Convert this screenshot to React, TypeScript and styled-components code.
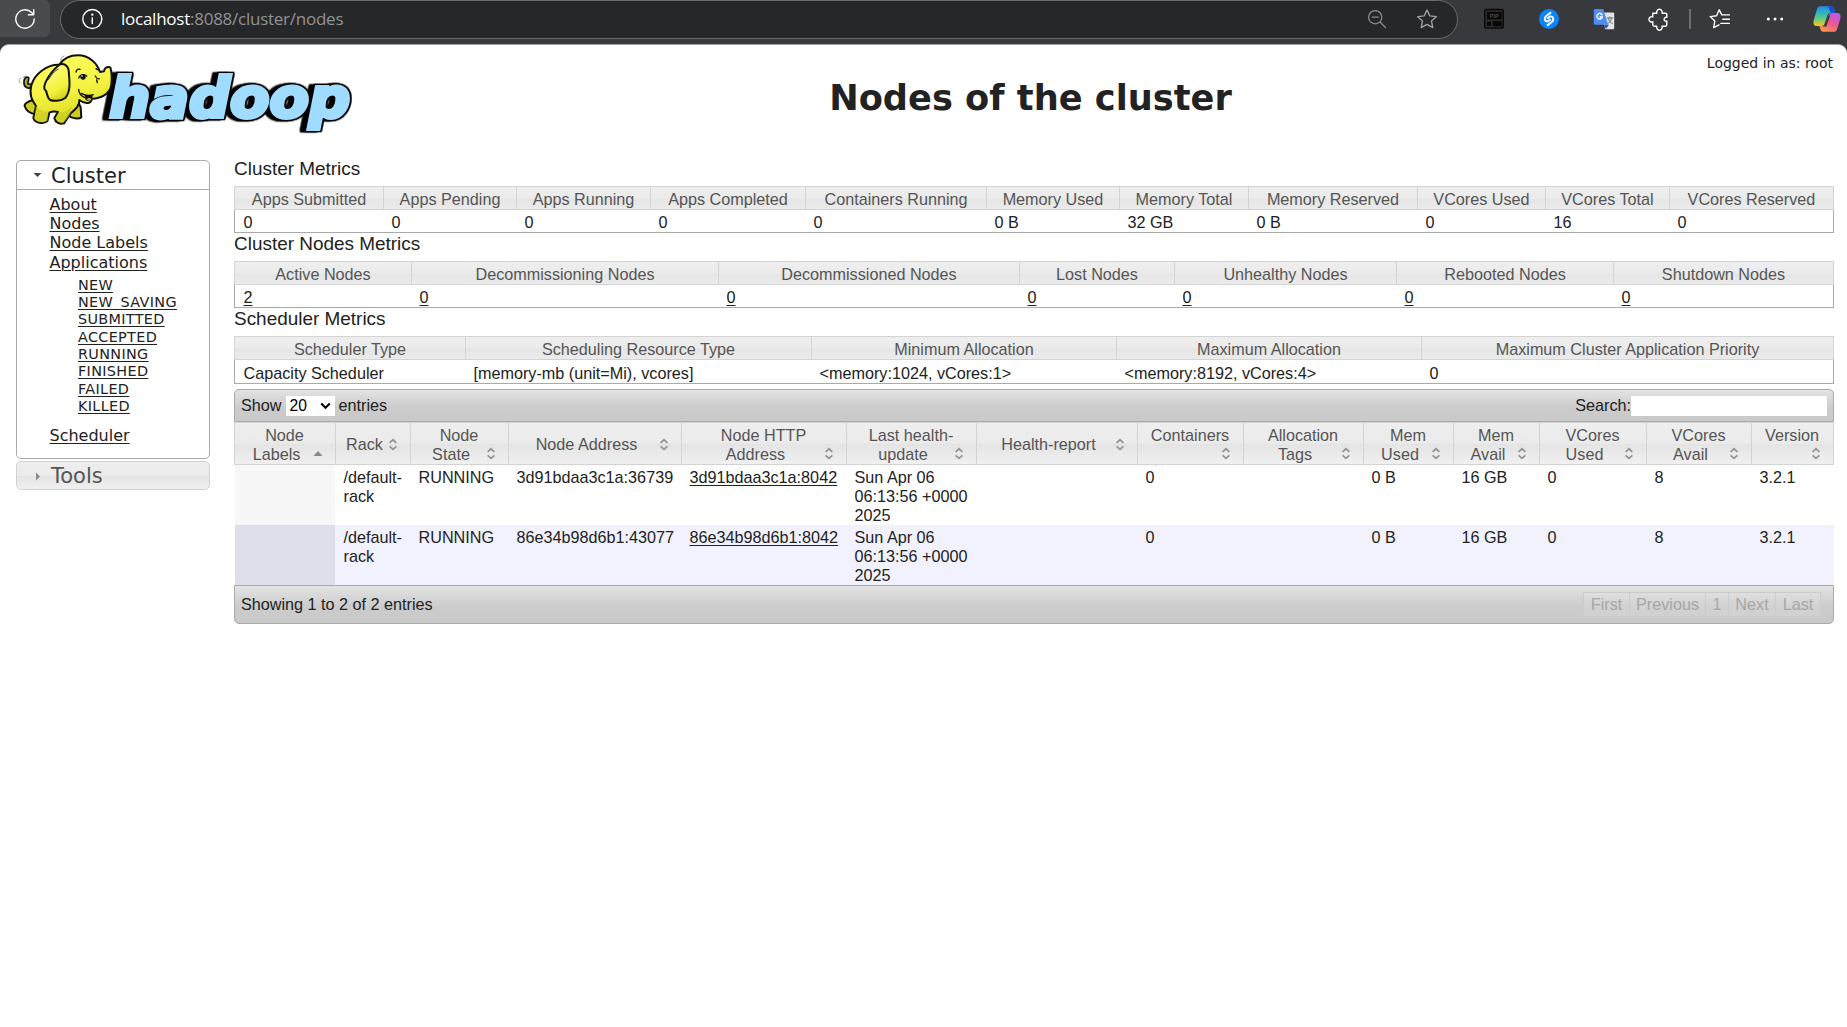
import React from "react";
import styled, { createGlobalStyle, css } from "styled-components";

const sans = `"Liberation Sans", Arial, sans-serif`;
const verdana = `"DejaVu Sans", Verdana, sans-serif`;

const GlobalStyle = createGlobalStyle`
  * { box-sizing: border-box; }
  body { margin: 0; background: #38393d; overflow: hidden; }
`;

const Window = styled.div`
  width: 1847px;
  height: 1027px;
  display: flex;
  flex-direction: column;
  overflow: hidden;
  background: #38393d;
`;

/* ---------- browser bar ---------- */

const BrowserBar = styled.div`
  flex: none;
  height: 44px;
  display: flex;
  align-items: flex-start;
  overflow: hidden;
`;

const ReloadButton = styled.div`
  flex: none;
  width: 50px;
  height: 37px;
  margin-right: 10px;
  padding: 4px 0 0 10px;
  background: #4a4b4e;
  border-radius: 0 6px 6px 0;
`;

const AddressBar = styled.div`
  flex: none;
  width: 1398px;
  height: 39px;
  display: flex;
  align-items: flex-start;
  background: #262729;
  border: 1px solid #6c6c6e;
  border-radius: 20px;
  margin-right: 8px;
  padding: 3px 5px 0 16px;
`;

const Address = styled.div`
  flex: 1;
  margin-left: 14px;
  font: 17px/30px "Open Sans", "Noto Sans", sans-serif;
  letter-spacing: -0.25px;
  color: #929294;
`;

const Host = styled.span`
  color: #fff;
`;

const Slot = styled.div<{ $w: number; $h?: number }>`
  flex: none;
  width: ${(p) => p.$w}px;
  height: ${(p) => p.$h ?? 38}px;
  display: flex;
  align-items: center;
  justify-content: center;
`;

const Divider = styled.div`
  flex: none;
  width: 2px;
  height: 20px;
  margin: 9px 1px 0 3px;
  background: #6d6e71;
`;

const BarIcon = styled.svg`
  flex: none;
  width: 30px;
  height: 30px;
  display: block;
  fill: none;
  stroke-linecap: round;
  stroke-linejoin: round;
`;

/* ---------- page ---------- */

const Page = styled.main`
  flex: 1;
  display: flex;
  flex-direction: column;
  background: #fff;
  border-top: 1px solid #a3a3a5;
  border-radius: 9px 9px 0 0;
  color: #222;
`;

const Header = styled.header`
  height: 113px;
  display: grid;
  grid-template-columns: 370px 1fr 156px;
  padding-right: 14px;
`;

const Logo = styled.svg`
  width: 370px;
  height: 95px;
  display: block;
`;

const Wordmark = styled.text`
  font: italic bold 168px ${verdana};
  fill: #9fdcff;
  stroke: #9fdcff;
  stroke-width: 12px;
  stroke-linejoin: miter;
  filter: drop-shadow(4px 0 0 #000) drop-shadow(-4px 0 0 #000) drop-shadow(0 4px 0 #000)
    drop-shadow(0 -4px 0 #000) drop-shadow(-14px 1px 0 #000);
`;

const Title = styled.h1`
  margin: 0;
  padding: 30px 0 0 14px;
  text-align: center;
  font: bold 35.2px/46px ${verdana};
`;

const Login = styled.div`
  padding-top: 9px;
  text-align: right;
  white-space: nowrap;
  font: 14px/18px ${verdana};
`;

const Columns = styled.div`
  display: grid;
  grid-template-columns: 194px 1600px;
  column-gap: 24px;
  padding-left: 16px;
  align-items: start;
`;

/* ---------- sidebar ---------- */

const Sidebar = styled.nav`
  padding-top: 2px;
  display: flex;
  flex-direction: column;
  gap: 2px;
  font-family: ${verdana};
`;

const Panel = styled.section`
  border: 1px solid #aaa;
  border-radius: 5px;
  height: 299px;
`;

const PanelHead = styled.div<{ $closed?: boolean }>`
  height: 29px;
  display: flex;
  align-items: center;
  gap: 9px;
  padding: 1px 0 0 16px;
  font-size: 21px;
  line-height: 28px;
  ${(p) =>
    p.$closed
      ? css`
          border: 1px solid #d3d3d3;
          border-radius: 5px;
          color: #555;
          background: linear-gradient(#ededed 0, #ebebeb 50%, #e4e4e4 52%, #efefef 100%);
        `
      : css`
          border-bottom: 1px solid #aaa;
        `}
`;

const Caret = styled.svg`
  width: 9px;
  height: 9px;
`;

const NavList = styled.ul`
  list-style: none;
  margin: 0;
  padding: 5px 0 0 32.5px;
  font-size: 16px;
  line-height: 19.2px;
`;

const SubList = styled.ul`
  list-style: none;
  margin: 0;
  padding: 5px 0 11px 28.5px;
  font-size: 14.4px;
  line-height: 17.3px;
  letter-spacing: 0.33px;
`;

const Link = styled.a`
  color: #222;
  text-decoration: underline;
  text-decoration-thickness: 1px;
  text-underline-offset: 2px;
`;

/* ---------- metrics ---------- */

const Content = styled.div`
  font-family: ${sans};
  font-size: 16.2px;
`;

const SectionTitle = styled.div`
  height: 28px;
  font-size: 18.95px;
  line-height: 22px;
`;

const Table = styled.table`
  width: 1600px;
  table-layout: fixed;
  border-collapse: separate;
  border-spacing: 0;
  display: table;
`;

const headFill = "linear-gradient(#eeeeee 0, #ebebeb 49%, #e4e4e4 52%, #f0f0f0 100%)";

const MetricHead = styled.th`
  height: 24px;
  padding: 2px 0 0;
  font-weight: normal;
  line-height: 18px;
  text-align: center;
  color: #555;
  border: 1px solid #d3d3d3;
  border-right-width: 0;
  background: linear-gradient(#eeeeee 0, #ebebeb 50%, #e6e6e6 56%, #ebebeb 100%);
  &:last-child { border-right-width: 1px; }
`;

const MetricCell = styled.td<{ $h: number }>`
  height: ${(p) => p.$h}px;
  padding: 2px 0 0 8.5px;
  line-height: 18px;
  border-bottom: 1px solid #aaa;
  &:first-child { border-left: 1px solid #aaa; }
  &:last-child { border-right: 1px solid #aaa; }
`;

/* ---------- data table ---------- */

const barFill = "linear-gradient(#e3e3e3 0, #cccccc 55%, #c9c9c9 100%)";

const Toolbar = styled.div`
  height: 33px;
  margin-top: 5px;
  padding: 0 6px;
  display: flex;
  align-items: center;
  border: 1px solid #aaa;
  border-radius: 5px 5px 0 0;
  background: ${barFill};
`;

const Select = styled.div`
  width: 49px;
  height: 20px;
  margin: 0 4px;
  padding: 0 4px;
  display: flex;
  align-items: center;
  justify-content: space-between;
  font-size: 15.6px;
  background: #fff;
  color: #000;
`;

const SearchLabel = styled.label`
  margin-left: auto;
`;

const SearchInput = styled.input`
  width: 196px;
  height: 20px;
  padding: 0;
  border: 0;
  background: #fff;
`;

const ColHead = styled.th`
  height: 43px;
  padding: 2px 9px 0 8px;
  font-weight: normal;
  line-height: 19px;
  color: #555;
  border: 1px solid #d3d3d3;
  border-right-width: 0;
  background: ${headFill};
  &:last-child { border-right-width: 1px; }
`;

const HeadLine = styled.div`
  height: 19px;
  display: flex;
  align-items: center;
  justify-content: center;
  white-space: nowrap;
`;

const HeadText = styled.span`
  flex: 1;
  text-align: center;
`;

const SortIcon = styled.svg`
  flex: none;
  width: 16px;
  height: 16px;
`;

const Row = styled.tr<{ $even?: boolean }>`
  background: ${(p) => (p.$even ? "#f2f2ff" : "#fff")};
  & > td:first-child {
    background: ${(p) => (p.$even ? "#dfdfea" : "#f7f7f7")};
    background-clip: padding-box;
    border-left: 1px solid #fff;
  }
`;

const Cell = styled.td`
  height: 60px;
  padding: 3px 0 0 8.5px;
  vertical-align: top;
  line-height: 19px;
  white-space: pre-line;
`;

const Footer = styled.div`
  height: 39px;
  padding: 0 12px 0 6px;
  display: flex;
  align-items: center;
  justify-content: space-between;
  border: 1px solid #aaa;
  border-radius: 0 0 5px 5px;
  background: ${barFill};
`;

const Pager = styled.div`
  display: flex;
`;

const PageButton = styled.span<{ $w: number }>`
  width: ${(p) => p.$w}px;
  height: 25px;
  line-height: 23px;
  text-align: center;
  color: #a6a6a6;
  border: 1px solid #cbcbcb;
  border-right-width: 0;
  background: rgba(255, 255, 255, 0.12);
  &:last-child { border-right-width: 1px; }
`;

type Metric = { label: string; value: string; w: number };

const clusterMetrics: Metric[] = [
  { label: "Apps Submitted", value: "0", w: 149 },
  { label: "Apps Pending", value: "0", w: 133 },
  { label: "Apps Running", value: "0", w: 134 },
  { label: "Apps Completed", value: "0", w: 155 },
  { label: "Containers Running", value: "0", w: 181 },
  { label: "Memory Used", value: "0 B", w: 133 },
  { label: "Memory Total", value: "32 GB", w: 129 },
  { label: "Memory Reserved", value: "0 B", w: 169 },
  { label: "VCores Used", value: "0", w: 128 },
  { label: "VCores Total", value: "16", w: 124 },
  { label: "VCores Reserved", value: "0", w: 165 },
];

const nodeMetrics: Metric[] = [
  { label: "Active Nodes", value: "2", w: 177 },
  { label: "Decommissioning Nodes", value: "0", w: 307 },
  { label: "Decommissioned Nodes", value: "0", w: 301 },
  { label: "Lost Nodes", value: "0", w: 155 },
  { label: "Unhealthy Nodes", value: "0", w: 222 },
  { label: "Rebooted Nodes", value: "0", w: 217 },
  { label: "Shutdown Nodes", value: "0", w: 221 },
];

const schedulerMetrics: Metric[] = [
  { label: "Scheduler Type", value: "Capacity Scheduler", w: 231 },
  { label: "Scheduling Resource Type", value: "[memory-mb (unit=Mi), vcores]", w: 346 },
  { label: "Minimum Allocation", value: "<memory:1024, vCores:1>", w: 305 },
  { label: "Maximum Allocation", value: "<memory:8192, vCores:4>", w: 305 },
  { label: "Maximum Cluster Application Priority", value: "0", w: 413 },
];

const MetricsTable = ({ items, rowHeight, linked }: { items: Metric[]; rowHeight: number; linked?: boolean }) => (
  <Table>
    <colgroup>
      {items.map((m) => (
        <col key={m.label} style={{ width: m.w }} />
      ))}
    </colgroup>
    <thead>
      <tr>
        {items.map((m) => (
          <MetricHead key={m.label}>{m.label}</MetricHead>
        ))}
      </tr>
    </thead>
    <tbody>
      <tr>
        {items.map((m) => (
          <MetricCell key={m.label} $h={rowHeight}>
            {linked ? <Link>{m.value}</Link> : m.value}
          </MetricCell>
        ))}
      </tr>
    </tbody>
  </Table>
);

const nodeColumns: { lines: string[]; w: number; sorted?: boolean }[] = [
  { lines: ["Node", "Labels"], w: 101, sorted: true },
  { lines: ["Rack"], w: 75 },
  { lines: ["Node", "State"], w: 98 },
  { lines: ["Node Address"], w: 173 },
  { lines: ["Node HTTP", "Address"], w: 165 },
  { lines: ["Last health-", "update"], w: 130 },
  { lines: ["Health-report"], w: 161 },
  { lines: ["Containers", ""], w: 106 },
  { lines: ["Allocation", "Tags"], w: 120 },
  { lines: ["Mem", "Used"], w: 90 },
  { lines: ["Mem", "Avail"], w: 86 },
  { lines: ["VCores", "Used"], w: 107 },
  { lines: ["VCores", "Avail"], w: 105 },
  { lines: ["Version", ""], w: 83 },
];

const health = "Sun Apr 06\n06:13:56 +0000\n2025";
const nodes = [
  ["", "/default-\nrack", "RUNNING", "3d91bdaa3c1a:36739", "3d91bdaa3c1a:8042", health, "", "0", "", "0 B", "16 GB", "0", "8", "3.2.1"],
  ["", "/default-\nrack", "RUNNING", "86e34b98d6b1:43077", "86e34b98d6b1:8042", health, "", "0", "", "0 B", "16 GB", "0", "8", "3.2.1"],
];

const Sort = ({ sorted }: { sorted?: boolean }) => (
  <SortIcon viewBox="0 0 16 16">
    {sorted ? (
      <path d="M3.5 10 L8 5 L12.5 10 Z" fill="#888" />
    ) : (
      <path d="M4.6 5.8 L8 2.8 L11.4 5.8 M4.6 9.4 L8 12.4 L11.4 9.4" fill="none" stroke="#949494" strokeWidth="1.8" />
    )}
  </SortIcon>
);

const HadoopLogo = () => (
  <Logo viewBox="0 135 1110 285">
    <Wordmark x="328" y="352" textLength="722" lengthAdjust="spacingAndGlyphs">
      hadoop
    </Wordmark>
    <g stroke="#111" strokeWidth="6" strokeLinejoin="round" strokeLinecap="round">
      <path d="M94 262 C84 268 72 262 72 250 C70 236 78 228 86 233 C88 240 82 246 84 252 L94 252 Z" fill="#a9a81c" strokeWidth="5" />
      <path d="M98 300 C84 304 72 312 74 318 C78 332 92 342 106 342 L118 320 Z" fill="#cfce1e" />
      <path d="M214 322 L206 346 C214 356 236 358 244 352 L242 322 L232 300 Z" fill="#cfce1e" />
      <path
        d="M178 194 C144 192 104 220 94 256 C86 288 98 302 108 318 L100 354 C104 370 132 372 142 364 L148 338 C156 334 166 334 174 336 L163 354 C166 368 180 374 192 370 L212 340 C226 328 240 316 238 300 C256 314 272 312 276 296 C300 296 330 284 334 254 C336 236 336 218 331 202 C322 198 312 204 312 214 L300 216 C292 190 268 166 234 166 C208 166 190 176 178 194 Z"
        fill="url(#skin)"
      />
      <path
        d="M178 194 C190 188 204 196 206 212 C208 240 214 272 196 294 C182 304 160 304 150 300 C138 290 144 276 134 268 C128 258 146 220 178 194 Z"
        fill="url(#ear)"
      />
    </g>
    <path d="M108 318 C116 330 130 338 146 334 L142 362 C132 370 108 368 103 356 Z M176 336 C190 340 204 328 216 320 C214 340 204 356 192 366 C180 370 168 364 167 355 Z" fill="#c4c41a" opacity=".55" />
    <g fill="none" stroke="#111" strokeWidth="4" strokeLinecap="round">
      <path d="M228 216 C230 208 236 206 240 208 M288 206 L294 210 M286 228 C290 236 292 238 298 236 M290 240 L292 248 M236 234 C240 224 252 220 260 228 M236 268 C236 280 244 290 258 294 M244 280 C254 286 268 288 280 284" />
      <path d="M146 238 C154 224 164 212 174 208" strokeWidth="2.5" />
      <path d="M182 180 C182 174 186 170 192 168 M62 250 C56 244 56 238 62 234 M70 232 L76 228" stroke="#999" strokeWidth="3" />
    </g>
    <ellipse cx="249" cy="231" rx="8" ry="8" fill="#111" />
    <circle cx="246" cy="228" r="2.4" fill="#fff" />
    <path d="M256 285 L278 286 C278 298 270 305 260 302 C255 298 254 290 256 285 Z" fill="#111" />
    <path d="M260 298 C265 292 272 294 274 298 C270 304 264 304 260 298 Z" fill="#c9a24a" />
    <defs>
      <linearGradient id="skin" x1="0" y1="0" x2="0.3" y2="1">
        <stop offset="0" stopColor="#fbfb62" />
        <stop offset="0.55" stopColor="#f6f545" />
        <stop offset="1" stopColor="#dcdb25" />
      </linearGradient>
      <linearGradient id="ear" x1="0.2" y1="0" x2="0.6" y2="1">
        <stop offset="0" stopColor="#fdfd8a" />
        <stop offset="0.7" stopColor="#f3f23c" />
        <stop offset="1" stopColor="#cfce22" />
      </linearGradient>
    </defs>
  </Logo>
);

const Browser = () => (
  <BrowserBar>
    <ReloadButton>
      <BarIcon viewBox="0 0 30 30" stroke="#fff" strokeWidth="1.4">
        <path d="M24.2 15 A9.2 9.2 0 1 1 21.6 8.6 L23.6 10.6 M23.7 5.6 L23.7 10.8 L18.4 10.8" />
      </BarIcon>
    </ReloadButton>
    <AddressBar>
      <BarIcon viewBox="0 0 30 30" stroke="#fff" strokeWidth="1.4">
        <circle cx="15.3" cy="15" r="9.5" />
        <path d="M15.3 13.7 V19.6" />
        <circle cx="15.3" cy="10.6" r=".5" fill="#fff" />
      </BarIcon>
      <Address>
        <Host>localhost</Host>:8088/cluster/nodes
      </Address>
      <Slot $w={50} $h={30}>
        <BarIcon viewBox="0 0 30 30" stroke="#8d8d8f" strokeWidth="1.3">
          <circle cx="13.2" cy="13.2" r="6.6" />
          <path d="M18 18 L23.5 23.5 M10.2 13.2 H16.2" />
        </BarIcon>
      </Slot>
      <Slot $w={50} $h={30}>
        <BarIcon viewBox="0 0 30 30" stroke="#a2a2a4" strokeWidth="1.3">
          <path d="M15 6 L17.8 11.9 L24.3 12.7 L19.5 17.1 L20.8 23.6 L15 20.4 L9.2 23.6 L10.5 17.1 L5.7 12.7 L12.2 11.9 Z" />
        </BarIcon>
      </Slot>
    </AddressBar>
    <Slot $w={55}>
      <BarIcon viewBox="0 0 30 30">
        <rect x="5.7" y="5.5" width="18.6" height="18.6" rx="1.8" fill="#2c2d30" stroke="#080808" strokeWidth="1.4" />
        <rect x="8" y="7.8" width="14.6" height="7.6" fill="#080808" />
        <rect x="8" y="17.6" width="4.2" height="4.2" fill="#080808" />
        <rect x="13.8" y="17" width="8.8" height="5.4" fill="#080808" />
        <text x="15.3" y="13.6" textAnchor="middle" fill="#4a4b4e" fontFamily="Liberation Sans" fontWeight="bold" fontSize="5.6">PIP</text>
      </BarIcon>
    </Slot>
    <Slot $w={55}>
      <BarIcon viewBox="0 0 30 30">
        <circle cx="15" cy="15" r="10" fill="#0a84ff" />
        <path d="M16.4 8.9 L12.3 12 C9.6 14 10.6 17.6 13.4 17.4 C14.6 17.2 15.2 16.6 16.2 15.8 M13.6 21.1 L17.7 18 C20.4 16 19.4 12.4 16.6 12.6 C15.4 12.8 14.8 13.4 13.8 14.2" stroke="#fff" strokeWidth="2" />
      </BarIcon>
    </Slot>
    <Slot $w={55}>
      <BarIcon viewBox="0 0 30 30">
        <path d="M14 8.5 H24 a1.2 1.2 0 0 1 1.2 1.2 V24 a1.2 1.2 0 0 1 -1.2 1.2 H16 Z" fill="#e4e4e4" />
        <path d="M17 24.9 L20 20.8 H14.8 Z" fill="#3550b8" />
        <path d="M6 5 H14.2 L19.2 20.8 H6 A1.2 1.2 0 0 1 4.8 19.6 V6.2 A1.2 1.2 0 0 1 6 5 Z" fill="#4f8bf5" />
        <path d="M13.2 11 A2.8 2.8 0 1 0 13.4 13 H11" stroke="#fff" strokeWidth="1.3" />
        <path d="M18.2 14 H23.6 M20.8 12.8 V14 M22.8 14 C22 17 20.4 18.6 18.8 19.6 M19.2 14.4 C20 17 21.6 18.8 23.4 19.6" stroke="#5f7580" strokeWidth="1" />
      </BarIcon>
    </Slot>
    <Slot $w={55}>
      <BarIcon viewBox="0 0 30 30" stroke="#fff" strokeWidth="1.4">
        <path d="M8.8 9.2 H12.9 A2.8 2.8 0 1 1 18 9.2 H21.6 A1.2 1.2 0 0 1 22.8 10.4 V13.4 C19.4 12.4 19 18 22.8 17 V20.8 A1.6 1.6 0 0 1 21.4 22.3 H18 A2.8 2.8 0 1 1 12.9 22.3 H10.4 A1.6 1.6 0 0 1 8.8 20.8 V17.8 A2.7 2.7 0 1 1 8.8 12.9 Z" />
      </BarIcon>
    </Slot>
    <Divider />
    <Slot $w={55}>
      <BarIcon viewBox="0 0 30 30" stroke="#fff" strokeWidth="1.4">
        <path d="M19.4 10.9 L16.8 10.9 L14.2 5.8 L11.6 11.7 L5.2 12.6 L9.8 17 L8.7 23.6 L14 20.8 M17.8 15.2 H24.4 M15.8 19.4 H24.4 M19.4 10.9 H24.4" />
      </BarIcon>
    </Slot>
    <Slot $w={55}>
      <BarIcon viewBox="0 0 30 30">
        <circle cx="8.3" cy="15" r="1.5" fill="#fff" />
        <circle cx="15" cy="15" r="1.5" fill="#fff" />
        <circle cx="21.7" cy="15" r="1.5" fill="#fff" />
      </BarIcon>
    </Slot>
    <Slot $w={50}>
      <BarIcon viewBox="0 0 30 30">
        <defs>
          <linearGradient id="cpl" x1="0" y1="0" x2="0" y2="1">
            <stop offset="0" stopColor="#1f8df0" />
            <stop offset=".5" stopColor="#3fc4a0" />
            <stop offset="1" stopColor="#f2cf1c" />
          </linearGradient>
          <linearGradient id="cpr" x1="0.8" y1="0" x2="0.2" y2="1">
            <stop offset="0" stopColor="#b45cf0" />
            <stop offset=".5" stopColor="#f0568e" />
            <stop offset="1" stopColor="#ff9a4a" />
          </linearGradient>
        </defs>
        <path d="M8 2.2 H19 C21 2.2 21.6 3.6 22.2 5.4 L23.4 9 H18.5 C16.6 9 15.8 10 15.2 12 L12.8 19 C12 21.4 11 22 9 22 H5 C1.4 22 0.8 19 2 15.4 L4.6 6.2 C5.4 3.6 6.4 2.2 8 2.2 Z" fill="url(#cpl)" />
        <path d="M16 2.2 H19 C21 2.2 21.6 3.6 22.2 5.4 L23.4 9 H18.8 Z" fill="#1b4fd0" />
        <path d="M22 27.8 H11.4 C9.4 27.8 8.8 26.4 8.2 24.6 L7.2 21.8 H11 C12.6 21.8 13.6 20.6 14.2 18.6 L16.4 11.8 C17 9.6 18.2 9 20 9 H25 C28.6 9 29.2 11.4 28.2 15 L25.4 24.4 C24.6 26.8 23.6 27.8 22 27.8 Z" fill="url(#cpr)" />
        <path d="M18.4 10.6 L14.4 22.4 L10.6 22.4 C13.2 21.4 13.8 19.6 14.4 17.8 L16.2 12 Z" fill="#38393d" />
      </BarIcon>
    </Slot>
  </BrowserBar>
);

const appStates = ["NEW", "NEW_SAVING", "SUBMITTED", "ACCEPTED", "RUNNING", "FINISHED", "FAILED", "KILLED"];

export default function App() {
  return (
    <Window>
      <GlobalStyle />
      <Browser />
      <Page>
        <Header>
          <HadoopLogo />
          <Title>Nodes of the cluster</Title>
          <Login>Logged in as: root</Login>
        </Header>
        <Columns>
          <Sidebar>
            <Panel>
              <PanelHead>
                <Caret viewBox="0 0 9 9">
                  <path d="M0.5 2 H8.5 L4.5 6 Z" fill="#444" />
                </Caret>
                Cluster
              </PanelHead>
              <NavList>
                {["About", "Nodes", "Node Labels", "Applications"].map((t) => (
                  <li key={t}>
                    <Link>{t}</Link>
                  </li>
                ))}
                <li>
                  <SubList>
                    {appStates.map((t) => (
                      <li key={t}>
                        <Link>{t}</Link>
                      </li>
                    ))}
                  </SubList>
                </li>
                <li>
                  <Link>Scheduler</Link>
                </li>
              </NavList>
            </Panel>
            <PanelHead $closed>
              <Caret viewBox="0 0 9 9">
                <path d="M3 0.5 L7 4.5 L3 8.5 Z" fill="#888" />
              </Caret>
              Tools
            </PanelHead>
          </Sidebar>
          <Content>
            <SectionTitle>Cluster Metrics</SectionTitle>
            <MetricsTable items={clusterMetrics} rowHeight={23} />
            <SectionTitle>Cluster Nodes Metrics</SectionTitle>
            <MetricsTable items={nodeMetrics} rowHeight={23} linked />
            <SectionTitle>Scheduler Metrics</SectionTitle>
            <MetricsTable items={schedulerMetrics} rowHeight={24} />
            <Toolbar>
              Show
              <Select>
                20
                <svg width="11" height="8" viewBox="0 0 11 8">
                  <path d="M1.2 1.5 L5.5 5.8 L9.8 1.5" fill="none" stroke="#000" strokeWidth="2" />
                </svg>
              </Select>
              entries
              <SearchLabel htmlFor="search">Search:</SearchLabel>
              <SearchInput id="search" />
            </Toolbar>
            <Table>
              <colgroup>
                {nodeColumns.map((c, i) => (
                  <col key={i} style={{ width: c.w }} />
                ))}
              </colgroup>
              <thead>
                <tr>
                  {nodeColumns.map((c, i) => (
                    <ColHead key={i}>
                      {c.lines.map((line, j) => (
                        <HeadLine key={j}>
                          <HeadText>{line}</HeadText>
                          {j === c.lines.length - 1 && <Sort sorted={c.sorted} />}
                        </HeadLine>
                      ))}
                    </ColHead>
                  ))}
                </tr>
              </thead>
              <tbody>
                {nodes.map((n, r) => (
                  <Row key={r} $even={r % 2 === 1}>
                    {n.map((v, i) => (
                      <Cell key={i}>{i === 4 ? <Link>{v}</Link> : v}</Cell>
                    ))}
                  </Row>
                ))}
              </tbody>
            </Table>
            <Footer>
              Showing 1 to 2 of 2 entries
              <Pager>
                <PageButton $w={46}>First</PageButton>
                <PageButton $w={76}>Previous</PageButton>
                <PageButton $w={23}>1</PageButton>
                <PageButton $w={47}>Next</PageButton>
                <PageButton $w={46}>Last</PageButton>
              </Pager>
            </Footer>
          </Content>
        </Columns>
      </Page>
    </Window>
  );
}
